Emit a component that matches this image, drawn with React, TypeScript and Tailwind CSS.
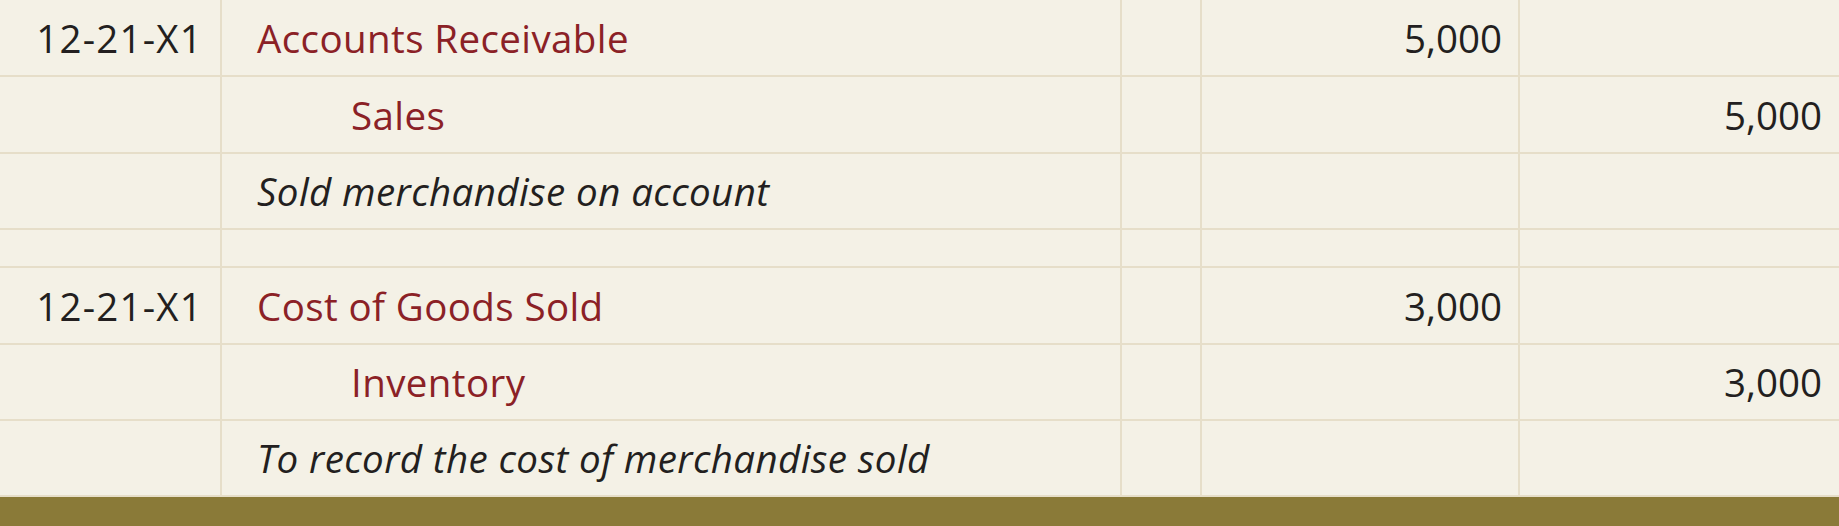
const rows = [
  { date: "12-21-X1", account: "Accounts Receivable", indent: false, italic: false, debit: "5,000", credit: "" },
  { date: "", account: "Sales", indent: true, italic: false, debit: "", credit: "5,000" },
  { date: "", account: "Sold merchandise on account", indent: false, italic: true, debit: "", credit: "" },
  { spacer: true },
  { date: "12-21-X1", account: "Cost of Goods Sold", indent: false, italic: false, debit: "3,000", credit: "" },
  { date: "", account: "Inventory", indent: true, italic: false, debit: "", credit: "3,000" },
  { date: "", account: "To record the cost of merchandise sold", indent: false, italic: true, debit: "", credit: "" },
];

type Row = {
  spacer?: boolean;
  date?: string;
  account?: string;
  indent?: boolean;
  italic?: boolean;
  debit?: string;
  credit?: string;
};

export default function App() {
  return (
    <div className="w-[1839px] h-[526px] bg-[#f4f1e6] flex flex-col font-['Open_Sans',sans-serif] text-[38.5px] text-[#231f20] overflow-hidden">
      <div className="grid grid-cols-[220px_898px_78px_316px_319px] grid-rows-[75px_75px_74px_36px_75px_74px_74px] gap-[2px] bg-[#e6dec9] border-b-2 border-[#e6dec9]">
        {(rows as Row[]).map((r, i) =>
          r.spacer ? (
            <>
              <div key={i + "a"} className="bg-[#f4f1e6]" />
              <div key={i + "b"} className="bg-[#f4f1e6]" />
              <div key={i + "c"} className="bg-[#f4f1e6]" />
              <div key={i + "d"} className="bg-[#f4f1e6]" />
              <div key={i + "e"} className="bg-[#f4f1e6]" />
            </>
          ) : (
            <>
              <div key={i + "a"} className="bg-[#f4f1e6] flex items-center justify-end pr-[17px] pt-[2px] tracking-[1.2px]">
                {r.date}
              </div>
              <div
                key={i + "b"}
                className={
                  "bg-[#f4f1e6] flex items-center pt-[2px] " +
                  (r.indent ? "pl-[129px] " : "pl-[35px] ") +
                  (r.italic ? "italic text-[#231f20] tracking-[0.4px]" : "text-[#8b2126] tracking-[0.4px]")
                }
              >
                {r.account}
              </div>
              <div key={i + "c"} className="bg-[#f4f1e6]" />
              <div key={i + "d"} className="bg-[#f4f1e6] flex items-center justify-end pr-[16px] pt-[2px]">
                {r.debit}
              </div>
              <div key={i + "e"} className="bg-[#f4f1e6] flex items-center justify-end pr-[17px] pt-[2px]">
                {r.credit}
              </div>
            </>
          )
        )}
      </div>
      <div className="flex-1 bg-[#8a7a38]" />
    </div>
  );
}
